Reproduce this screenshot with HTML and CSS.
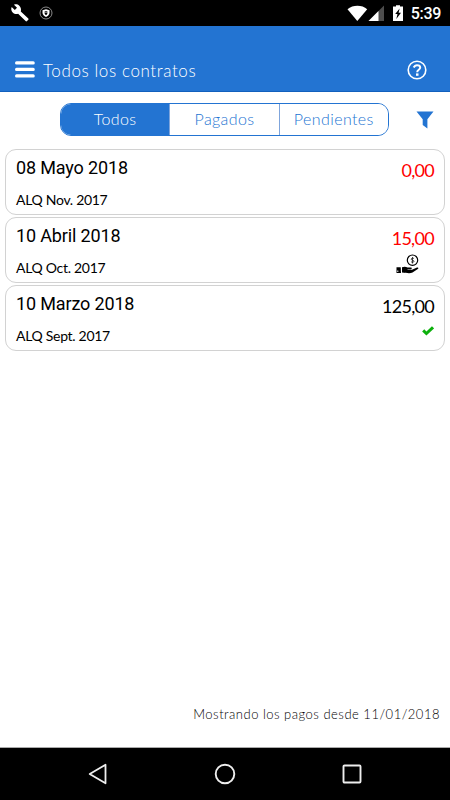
FILE: index.html
```html
<!DOCTYPE html>
<html lang="es">

<head>
    <meta charset="UTF-8">
    <meta name="viewport" content="width=device-width, initial-scale=1.0">
    <title>Todos los contratos</title>
    <link rel="stylesheet" href="styles.css">
</head>

<body>
    <div class="status-bar">
        <svg class="wrench" width="20" height="20" viewBox="0 0 20 20">
            <path fill="#fff" d="M18.300 15.400L10.800 8.500C11.400 6.400 10.900 4.300 9.300 2.700C7.800 1.300 5.700 1 4 1.700L7 4.700L4.800 6.900L1.700 3.900C0.800 5.700 1.200 7.900 2.700 9.400C4.200 10.900 6.300 11.300 8.100 10.700L15.600 18.100C16 18.500 16.600 18.500 17 18.100L18.300 16.800C18.700 16.400 18.700 15.800 18.300 15.400Z"/>
        </svg>
        <svg class="shield" width="14" height="14" viewBox="0 0 14 14">
            <circle cx="7" cy="7" r="6" fill="none" stroke="#aaa" stroke-width="0.800"/>
            <path fill="#fff" d="M3.500 4.200L7 3.200L10.500 4.200V6.500C10.500 8.700 9 10.300 7 11C5 10.300 3.500 8.700 3.500 6.500Z"/>
            <path fill="#000" d="M5.700 5.200H8.300V7.200L7.500 9H6.500L5.700 7.200Z"/>
            <circle cx="7" cy="6.300" r="0.600" fill="#fff"/>
        </svg>
        <div class="status-right">
            <svg width="58" height="17" viewBox="0 0 58 17">
                <path fill="#fff" d="M2.500 4.200C8 -0.300 17 -0.300 22.200 4.200L12.300 16Z"/>
                <path fill="#4d4d4d" d="M39 0.500V16H23.500Z"/>
                <path fill="#fff" d="M33.500 6V16H23.500Z"/>
                <path fill="#fff" d="M48 1.500H51V0.200H55V1.500H58V16H48Z"/>
                <path fill="#000" d="M54.600 3.500L50.200 9H52.500L51.300 14L56 7.800H53.600Z"/>
            </svg>
            <span class="clock">5:39</span>
        </div>
    </div>

    <header class="app-header">
        <svg class="menu" width="20" height="17" viewBox="0 0 20 17">
            <path stroke="#fff" stroke-width="3.200" stroke-linecap="round" d="M1.600 1.900H18.200M1.600 8.400H18.200M1.600 14.900H18.200"/>
        </svg>
        <h1>Todos los contratos</h1>
        <svg class="help" width="20" height="20" viewBox="0 0 20 20" fill="none" stroke="#fff">
            <circle cx="10" cy="10" r="8.800" stroke-width="1.600"/>
            <path stroke-width="2" d="M6.700 7.500C7.400 5.900 8.500 5.200 10 5.200C11.800 5.200 13.200 6.200 13.200 7.600C13.200 9.900 10.200 9.700 10.200 12.200"/>
            <path stroke-width="2.400" d="M9 14.600H11.500"/>
        </svg>
    </header>

    <main class="content">
        <div class="toolbar">
            <div class="tabs">
                <button class="tab active">Todos</button>
                <button class="tab">Pagados</button>
                <button class="tab">Pendientes</button>
            </div>
            <svg class="filter" width="18" height="18" viewBox="0 0 18 18">
                <path fill="#2374d2" d="M0.500 0.500H17.500L11.400 8.200V17.500L6.700 14V8.200Z"/>
            </svg>
        </div>

        <div class="card">
            <div class="info">
                <div class="date">08 Mayo 2018</div>
                <div class="concept">ALQ Nov. 2017</div>
            </div>
            <div class="payment">
                <div class="amount due">0,00</div>
            </div>
        </div>

        <div class="card">
            <div class="info">
                <div class="date">10 Abril 2018</div>
                <div class="concept">ALQ Oct. 2017</div>
            </div>
            <div class="payment">
                <div class="amount due">15,00</div>
                <svg class="hand" width="24" height="20" viewBox="0 0 24 20">
                    <circle cx="16.500" cy="6.200" r="5.200" fill="#fff" stroke="#000" stroke-width="1.200"/>
                    <path fill="none" stroke="#000" stroke-width="0.700" d="M18 4.600C17.200 3.900 15.200 4 15.200 5.200C15.200 6.500 18 5.900 18 7.300C18 8.600 15.700 8.500 15 7.600M16.500 3V9.500"/>
                    <path d="M0.500 13.300H4.700L5 19H0.500Z"/>
                    <path fill="#fff" d="M1.300 16.500H2.300V18H1.300Z"/>
                    <path d="M6 13.300C8.500 12.300 10 12.800 11.500 13.600H15C16.200 13.800 16.100 15 15 15.300H11.500V15.800H16L21 13.500C22.500 13.200 22.900 14.200 21.800 14.900L16.500 18.600C14.500 19.500 11 19.200 6 18.500Z"/>
                </svg>
            </div>
        </div>

        <div class="card">
            <div class="info">
                <div class="date">10 Marzo 2018</div>
                <div class="concept">ALQ Sept. 2017</div>
            </div>
            <div class="payment">
                <div class="amount">125,00</div>
                <svg class="check" width="12" height="10" viewBox="0 0 12 10">
                    <path fill="none" stroke="#0cb00c" stroke-width="3" d="M1.200 4.400L4.400 7.500L11 1.300"/>
                </svg>
            </div>
        </div>

        <p class="footnote">Mostrando los pagos desde 11/01/2018</p>
    </main>

    <nav class="nav-bar">
        <svg width="20" height="22" viewBox="0 0 20 22">
            <path fill="none" stroke="#eee" stroke-width="1.800" stroke-linejoin="round" d="M17.500 1.700V20.300L1.700 11Z"/>
        </svg>
        <svg width="22" height="22" viewBox="0 0 22 22">
            <circle cx="11" cy="11" r="9.300" fill="none" stroke="#eee" stroke-width="1.900"/>
        </svg>
        <svg width="20" height="20" viewBox="0 0 20 20">
            <rect x="1.500" y="1.500" width="17" height="17" rx="1" fill="none" stroke="#eee" stroke-width="1.900"/>
        </svg>
    </nav>
</body>

</html>
```
FILE: styles.css
```css
* {
    box-sizing: border-box;
}

body {
    margin: 0;
    height: 800px;
    display: flex;
    flex-direction: column;
    background-color: #fff;
    color: #000;
    font-family: Lato, 'Open Sans', sans-serif;
    overflow: hidden;
}

svg {
    display: block;
    flex: none;
}

.status-bar {
    height: 26px;
    padding: 0 9px 0 10px;
    display: flex;
    align-items: center;
    background-color: #000;
    color: #fff;
}

.shield {
    margin-left: 9px;
}

.status-right {
    margin-left: auto;
    display: flex;
    align-items: center;
    gap: 8px;
}

.clock {
    font-family: Roboto, sans-serif;
    font-size: 16px;
    font-weight: 500;
    line-height: 26px;
    padding-top: 2px;
    letter-spacing: -0.3px;
}

.app-header {
    height: 66px;
    padding: 22px 23px 0 15px;
    display: flex;
    align-items: center;
    background-color: #2374d2;
    border-bottom: 1px solid #1260bd;
    color: #fff;
}

h1 {
    margin: 0 auto 0 8px;
    padding-top: 2px;
    font-size: 17px;
    font-weight: 300;
    line-height: 24px;
    letter-spacing: 0.6px;
}

.content {
    flex: 1;
    display: flex;
    flex-direction: column;
    border-bottom: 1px solid #aaa;
    padding: 11px 5px 0;
}

.toolbar {
    display: flex;
    align-items: center;
    margin: 0 11px 13px 55px;
}

.tabs {
    width: 329px;
    height: 33px;
    display: flex;
    border: 1px solid #2374d2;
    border-radius: 11px;
    overflow: hidden;
}

.tab {
    flex: 1;
    padding: 0 0 2px;
    border: 0;
    border-left: 1px solid #7fa5dc;
    background-color: #fff;
    color: #2374d2;
    font-family: inherit;
    font-size: 16px;
    font-weight: 300;
    letter-spacing: 0.4px;
}

.tab.active {
    border-left: 0;
    background-color: #2374d2;
    color: #fff;
}

.filter {
    margin-left: auto;
}

.card {
    height: 66px;
    margin-bottom: 2px;
    padding: 0 10px;
    display: flex;
    justify-content: space-between;
    border: 1px solid #d2d2d2;
    border-radius: 11px;
}

.date {
    margin-top: 7px;
    font-family: Roboto, sans-serif;
    font-size: 18px;
    line-height: 22px;
    letter-spacing: -0.15px;
}

.concept {
    margin-top: 12px;
    font-size: 14px;
    line-height: 18px;
    letter-spacing: -0.3px;
}

.payment {
    display: flex;
    flex-direction: column;
    align-items: flex-end;
}

.amount {
    margin-top: 8px;
    font-size: 18px;
    line-height: 24px;
    letter-spacing: -0.7px;
}

.due {
    color: #f00;
}

.hand {
    margin: 4px 14px 0 0;
}

.check {
    margin-top: 8px;
}

.footnote {
    margin: auto 5px 24px;
    text-align: right;
    font-size: 13px;
    font-weight: 300;
    line-height: 18px;
    letter-spacing: 0.5px;
}

.nav-bar {
    height: 52px;
    padding: 0 88px;
    display: flex;
    align-items: center;
    justify-content: space-between;
    background-color: #000;
}
```
